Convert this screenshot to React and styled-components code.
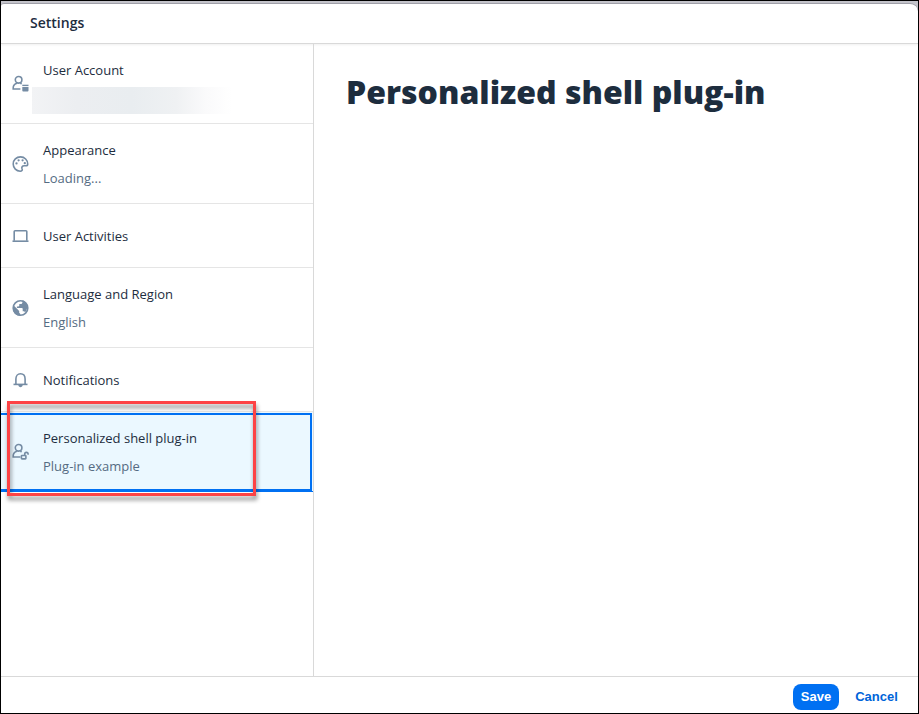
import React from "react";
import styled, { createGlobalStyle, css } from "styled-components";

const Global = createGlobalStyle`
  * { box-sizing: border-box; }
  body { margin: 0; font-family: "Open Sans", "Noto Sans", sans-serif; color: #1d2d3e; background: #fff; }
`;

const Frame = styled.div`
  width: 919px;
  height: 714px;
  border: 1px solid #000;
  border-top-width: 1px;
  background: #c3c3ca;
  padding-top: 2px;
  overflow: hidden;
`;

const Dialog = styled.div`
  height: 710px;
  display: flex;
  flex-direction: column;
  background: #fff;
  border-top: 1px solid #9999a3;
  border-radius: 3px 8px 0 0;
`;

const Header = styled.header`
  flex: 0 0 40px;
  display: flex;
  align-items: center;
  padding: 0 0 1px 29px;
  border-bottom: 1px solid #d9d9d9;
  box-shadow: 0 1px 2px #f0f0f0;
`;

const Label = styled.span`
  display: block;
  white-space: nowrap;
  font-size: ${(p) => p.$size || 13}px;
  font-weight: ${(p) => p.$weight || 400};
  line-height: ${(p) => p.$line || 20}px;
  letter-spacing: ${(p) => p.$track || 0}px;
  color: ${(p) => p.$color || "#1d2d3e"};
`;

const Body = styled.div`
  flex: 1;
  display: flex;
  min-height: 0;
`;

const Sidebar = styled.nav`
  flex: 0 0 313px;
  border-right: 1px solid #d9d9d9;
`;

const Row = styled.div`
  position: relative;
  display: flex;
  align-items: center;
  height: ${(p) => (p.$short ? 64 : 80)}px;
  padding-left: 11px;
  gap: 14px;
  border-bottom: 1px solid #e5e5e5;
  ${(p) =>
    p.$selected &&
    css`
      background: #ebf8ff;
      border-bottom-color: #0070f2;
      &::before {
        content: "";
        position: absolute;
        inset: 1px 1px 0 0;
        border: 2px solid #0070f2;
        border-left: 0;
      }
    `}
`;

const Texts = styled.div`
  display: flex;
  flex-direction: column;
  gap: 8px;
`;

const Redacted = styled.div`
  width: 200px;
  height: 27px;
  margin: -1px 0 -6px -11px;
  background: linear-gradient(90deg, #f2f3f5 0, #eceef1 22%, #e9edf0 50%, #eff1f3 72%, #fafafb 87%, #fff 100%);
`;

const Icon = styled.svg`
  flex: none;
  width: 17px;
  height: 18px;
  color: #758ca4;
`;

const Callout = styled.div`
  position: absolute;
  z-index: 2;
  left: 6px;
  top: -11px;
  width: 249px;
  height: 95px;
  border: 3px solid #fd4345;
  filter: drop-shadow(1px 4px 2px rgba(0, 0, 0, 0.45));
`;

const Content = styled.main`
  flex: 1;
  padding: 26px 32px;
`;

const Title = styled.h1`
  margin: 0;
  white-space: nowrap;
  font-size: 32px;
  line-height: 44px;
  font-weight: 800;
  letter-spacing: ${(p) => p.$track}px;
`;

const Footer = styled.footer`
  flex: 0 0 37px;
  display: flex;
  align-items: center;
  justify-content: flex-end;
  gap: 16px;
  padding: 4px 20px 0 0;
  border-top: 1px solid #d9d9d9;
`;

const Button = styled.button`
  display: flex;
  align-items: center;
  justify-content: center;
  width: ${(p) => (p.$primary ? 46 : 43)}px;
  height: 26px;
  padding: 0;
  border: 0;
  border-radius: 8px;
  background: ${(p) => (p.$primary ? "#0070f2" : "transparent")};
`;

const Person = () => (
  <>
    <circle cx="6.6" cy="4.8" r="3.3" />
    <path d="M8.4 14H1.2v-1.2C1.2 10.4 2.8 8.8 5 8.2M8.2 8.2l1.5.7" />
  </>
);

const shapes = {
  account: (
    <>
      <Person />
      <path d="M10.3 10.2h6.2M10.3 12h6.2v3.5a.9.9 0 0 1-.9.9h-4.4a.9.9 0 0 1-.9-.9z" stroke="none" fill="currentColor" />
      <path d="M10.3 10.4h6.2" strokeWidth="1.4" />
    </>
  ),
  palette: (
    <>
      <path d="M8.5 1.9C4.4 1.9 1.2 4.9 1.2 9s3.2 7.2 7 7.2c1.7 0 2.5-1 1.9-2.2-.8-1.8.2-3.2 2-3.2h2c1 0 1.6-.7 1.6-1.8 0-4-3.1-7.1-7.2-7.1z" />
      <g fill="currentColor" stroke="none">
        <circle cx="4.5" cy="8.4" r="1.15" />
        <circle cx="6.6" cy="5.3" r="1.15" />
        <circle cx="10.6" cy="5.3" r="1.15" />
        <circle cx="12.8" cy="8.2" r="1.15" />
      </g>
    </>
  ),
  laptop: (
    <>
      <path d="M2.2 13.8V4.5a.8.8 0 0 1 .8-.8h11a.8.8 0 0 1 .8.8v9.3" />
      <path d="M.5 14.2h16" />
    </>
  ),
  globe: (
    <>
      <circle cx="8.5" cy="9" r="7.3" />
      <path
        d="M1.8 6.5 7.2 12v1.7l1.2 1.2v1.8C3.8 17 .4 13.2 1 8.6zM10.4 1.3v2.2c0 .9-.7 1.5-1.5 1.5H7.3v1.6c0 .5-.4.8-.9.8H4.9V9h5c.5 0 .8.4.8.8v2.5h.8c.7 0 1.3.5 1.5 1.1 3.9-4.2 2.4-10.3-2.6-12.1z"
        stroke="none"
        fill="currentColor"
      />
    </>
  ),
  bell: (
    <>
      <path d="M3.9 12.9V8c0-3.2 1.8-5.2 4.6-5.2s4.6 2 4.6 5.2v4.9" />
      <path d="M1.5 13.4h14" />
      <path d="M6.3 14h4.4c-.2 1.4-1 2.2-2.2 2.2S6.5 15.4 6.3 14z" stroke="none" fill="currentColor" />
    </>
  ),
  plugin: (
    <>
      <Person />
      <rect x="9.4" y="12.5" width="4.5" height="3.4" rx=".6" />
      <path d="M12.7 12.3v-1.2a1.7 1.7 0 0 1 3.4 0v.6" />
    </>
  ),
};

const items = [
  { icon: "account", title: "User Account", track: 0, redacted: true },
  { icon: "palette", title: "Appearance", track: 0, sub: "Loading...", subTrack: 0 },
  { icon: "laptop", title: "User Activities", track: 0 },
  { icon: "globe", title: "Language and Region", track: 0, sub: "English", subTrack: 0 },
  { icon: "bell", title: "Notifications", track: 0 },
  { icon: "plugin", title: "Personalized shell plug-in", track: 0, sub: "Plug-in example", subTrack: 0, selected: true },
];

export default function App() {
  return (
    <>
      <Global />
      <Frame>
        <Dialog>
          <Header>
            <Label $size={14} $weight={600}>Settings</Label>
          </Header>
          <Body>
            <Sidebar>
              {items.map((item) => (
                <Row key={item.icon} $short={!item.sub && !item.redacted} $selected={item.selected}>
                  <Icon viewBox="0 0 17 18" fill="none" stroke="currentColor" strokeWidth="1.6">
                    {shapes[item.icon]}
                  </Icon>
                  <Texts>
                    <Label $track={item.track}>{item.title}</Label>
                    {item.sub && <Label $color="#556b82" $track={item.subTrack}>{item.sub}</Label>}
                    {item.redacted && <Redacted />}
                  </Texts>
                  {item.selected && <Callout />}
                </Row>
              ))}
            </Sidebar>
            <Content>
              <Title $track={0}>Personalized shell plug-in</Title>
            </Content>
          </Body>
          <Footer>
            <Button $primary>
              <Label $weight={700} $color="#fff">Save</Label>
            </Button>
            <Button>
              <Label $weight={600} $color="#0064d9">Cancel</Label>
            </Button>
          </Footer>
        </Dialog>
      </Frame>
    </>
  );
}
